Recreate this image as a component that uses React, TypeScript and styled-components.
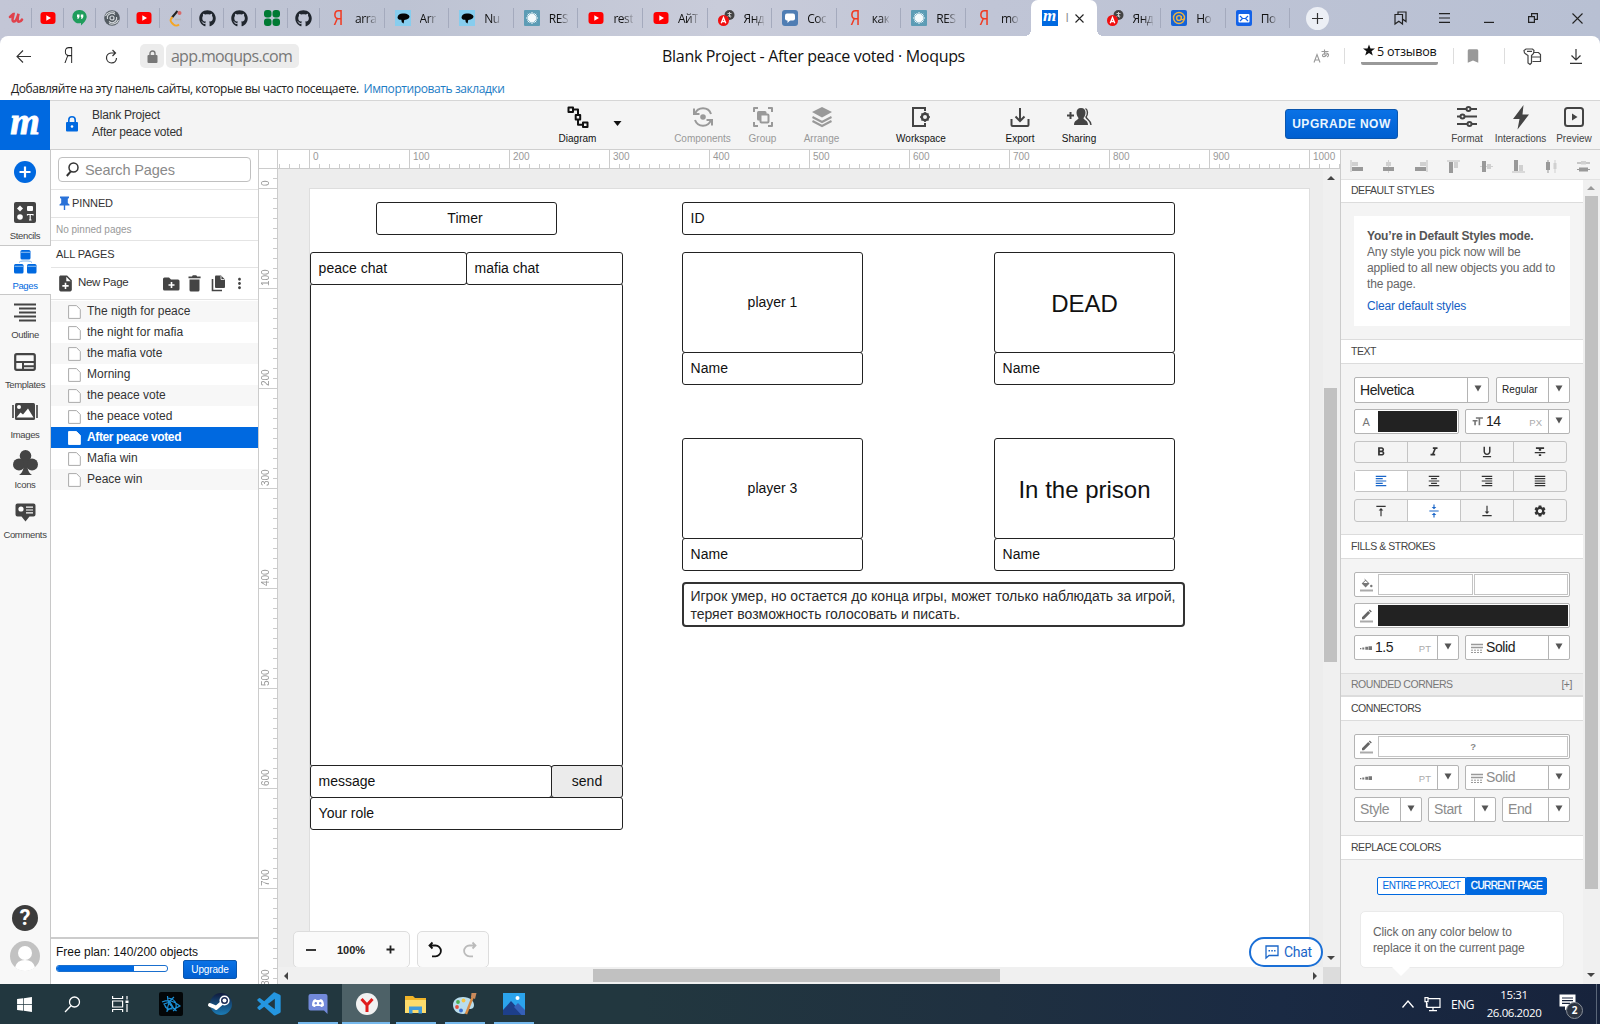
import React from "react";
import styled, { createGlobalStyle, css } from "styled-components";
import { FaGithub, FaWindows } from "react-icons/fa";
import { BiLogoVisualStudio } from "react-icons/bi";
import {
  MdNoteAdd, MdMoreVert, MdFormatBold, MdFormatItalic,
  MdFormatUnderlined, MdFormatStrikethrough, MdFormatAlignLeft, MdFormatAlignCenter,
  MdFormatAlignRight, MdFormatAlignJustify, MdVerticalAlignTop, MdVerticalAlignCenter,
  MdVerticalAlignBottom, MdSettings, MdFormatSize, MdBookmark,
} from "react-icons/md";

const arial = `"Liberation Sans", Arial, sans-serif`;
const segoe = `"Open Sans", "Noto Sans", sans-serif`;
const blue = "#0069e0";
const dark = "#444";
const grey = "#999";
const line = "#ccc";

const Global = createGlobalStyle`
  * { box-sizing: border-box; }
  body { margin: 0; overflow: hidden; font-family: ${arial}; color: #222; }
  svg { display: block; flex: none; overflow: visible; }
`;

const Screen = styled.div`
  width: 1600px; height: 1024px; display: flex; flex-direction: column; overflow: hidden; background: #fff;
`;

/* ---------- browser chrome ---------- */
const TabStrip = styled.div`
  height: 36px; display: flex; align-items: center; font-family: ${segoe};
  background: linear-gradient(90deg, #c3c6d6 0, #bdc3d3 25%, #c9ccda 45%, #c0c5d6 62%, #b8c0d3 100%);
`;
const PinnedTab = styled.div`
  width: 32px; height: 20px; display: flex; align-items: center; justify-content: center;
  border-right: 1px solid #a4aabd;
`;
const Tab = styled.div<{ $last?: boolean }>`
  width: 64.6px; height: 20px; display: flex; align-items: center; gap: 9px; padding-left: 10px;
  border-right: 1px solid ${(p) => (p.$last ? "transparent" : "#a4aabd")};
`;
const TabText = styled.span`
  white-space: nowrap; font-size: 12px; letter-spacing: -0.45px; color: #111;
  -webkit-mask-image: linear-gradient(90deg, #000 50%, rgba(0, 0, 0, 0.15)); mask-image: linear-gradient(90deg, #000 50%, rgba(0, 0, 0, 0.15));
`;
const ActiveTab = styled.div`
  position: relative; width: 66px; height: 36px; background: #fff; border-radius: 7px 7px 0 0;
  display: flex; align-items: center; padding-left: 11px;
  &::before, &::after { content: ""; position: absolute; bottom: 0; width: 6px; height: 6px; }
  &::before { left: -6px; background: radial-gradient(circle at 0 0, transparent 6px, #fff 6px); }
  &::after { right: -6px; background: radial-gradient(circle at 100% 0, transparent 6px, #fff 6px); }
`;
const ActiveText = styled.span`width: 4px; margin: 0 5px 0 8px; font-size: 12px; line-height: 16px; color: #888;`;
const YaFav = styled.span`
  width: 16px; height: 16px; flex: none; text-align: center; font: 400 20px/16px "Roboto", sans-serif; color: #f03a22; transform: scaleX(0.8);
`;
const NewTab = styled.div`
  width: 23px; height: 23px; margin-left: 16px; border-radius: 50%; background: #eceff5;
  display: flex; align-items: center; justify-content: center;
`;
const WindowIcons = styled.div`
  margin-left: auto; display: flex; height: 36px; align-items: center;
  > span { width: 44.4px; display: flex; justify-content: center; }
`;
const NavHolder = styled.div`background: linear-gradient(90deg, #c3c6d6, #b8c0d3);`;
const NavBar = styled.div`
  height: 40px; display: grid; grid-template-columns: 1fr auto 1fr; align-items: center; background: #fff;
  border-radius: 8px 8px 0 0; font-family: ${segoe};
`;
const NavLeft = styled.div`display: flex; align-items: center; padding-left: 16px; color: #222;`;
const Ya = styled.span`font: 300 22px/24px "Roboto", sans-serif; width: 12px; margin: 0 31px 0 31px; transform: scaleX(0.72);`;
const Pill = styled.span<{ $w: number }>`
  width: ${(p) => p.$w}px; height: 24px; border-radius: 5px; background: #ececec; display: flex;
  align-items: center; justify-content: center; color: #787878; font-size: 16px; letter-spacing: -0.66px; margin-right: 2px; padding-right: ${(p) => (p.$w > 30 ? 2 : 0)}px;
`;
const NavTitle = styled.div`font-size: 16px; letter-spacing: -0.32px; color: #111; white-space: nowrap; padding-left: 27px;`;
const NavRight = styled.div`display: flex; align-items: center; justify-content: flex-end; height: 100%; padding-right: 18px;`;
const Sep = styled.i<{ $l: number; $r: number }>`width: 1px; height: 16px; background: #ddd; margin: 0 ${(p) => p.$r}px 0 ${(p) => p.$l}px;`;
const Reviews = styled.div`
  width: 77px; height: 21px; border-bottom: 3px solid #999; border-radius: 0 0 2px 2px; margin-top: -4px; font-size: 12.5px; line-height: 16px;
  letter-spacing: -0.2px; color: #111; white-space: nowrap; display: flex; gap: 2px; padding-left: 2px;
`;
const Bookmarks = styled.div`
  height: 24px; padding: 1px 0 0 11px; font: 12px/24px ${segoe}; letter-spacing: -0.41px; color: #222; white-space: nowrap;
  a { color: #1b7cc4; margin-left: 2px; }
`;

/* ---------- app header ---------- */
const Header = styled.header`
  height: 50px; flex: none; display: flex; background: #f4f4f4; border-top: 1px solid #d6d6d6; border-bottom: 1px solid #cfcfcf;
`;
const Logo = styled.div`
  width: 50px; height: 50px; margin-top: -1px; background: ${blue}; color: #fff; flex: none; text-align: center;
  font: italic 700 38px/42px "Liberation Serif", serif; -webkit-text-stroke: 0.8px #fff;
`;
const LogoFav = styled.span`
  width: 16px; height: 16px; flex: none; background: ${blue}; color: #fff; text-align: center; font: italic 700 17px/12px "Liberation Serif", serif;
`;
const ProjectName = styled.div`
  display: flex; align-items: center; gap: 14px; padding: 0 0 2px 16px; width: 500.500px; flex: none;
  font-size: 12px; line-height: 17px; letter-spacing: -0.22px; color: #333;
`;
const Tools = styled.div`display: flex; width: 620px; flex: none;`;
const Tool = styled.div<{ $w: number; $tone?: string }>`
  width: ${(p) => p.$w}px; flex: none; display: flex; flex-direction: column; align-items: center; padding-top: 4px;
  font-size: 10px; line-height: 12px; color: ${(p) => p.$tone ?? "#111"}; white-space: nowrap;
  svg { margin-bottom: 4px; }
`;
const Spacer = styled.i<{ $w: number }>`width: ${(p) => p.$w}px; flex: none;`;
const UpgradeNow = styled.button`
  margin: 8px 0 0 114.5px; width: 113px; height: 30px; border: 1px solid #0b56ad; border-radius: 3px; padding: 0; flex: none;
  background: linear-gradient(#0a72e6, #005fd0); color: #eaf6ff; font: 700 12px ${arial}; letter-spacing: 0.55px;
`;
const HeaderRight = styled.div`display: flex; margin-left: 42px; flex: none;`;

/* ---------- workspace ---------- */
const Main = styled.div`flex: 1; display: flex; min-height: 0;`;
const Sidebar = styled.nav`
  width: 51px; flex: none; background: #f8f8f8; display: flex; flex-direction: column; align-items: center;
  border-right: 1px solid #c8c8c8;
`;
const AddButton = styled.div`
  width: 22px; height: 22px; border-radius: 50%; background: ${blue}; margin: 11px 0 12px;
  display: flex; align-items: center; justify-content: center; flex: none;
`;
const SideItem = styled.div<{ $active?: boolean }>`
  width: 51px; height: 49.8px; flex: none; display: flex; flex-direction: column; align-items: center; justify-content: flex-end;
  gap: 6px; padding-bottom: 3px; font-size: 9.5px; line-height: 12px; letter-spacing: -0.35px; color: #444;
  ${(p) => p.$active && css`background: #fff; color: ${blue}; border-top: 1px solid #c8c8c8; border-bottom: 1px solid #c8c8c8; padding-bottom: 2px;`}
`;
const SideFoot = styled.div`margin-top: auto; padding-bottom: 13px; display: flex; flex-direction: column; align-items: center; gap: 10px;`;
const HelpDot = styled.div`
  width: 26px; height: 26px; border-radius: 50%; background: #3c3c3c; color: #fff; font: 700 22px/26px "Roboto", sans-serif; text-align: center;
`;

const PagesPanel = styled.aside`width: 208px; flex: none; display: flex; flex-direction: column; border-right: 1px solid #ccc; background: #fff;`;
const Search = styled.div`
  margin: 7px 7px 7px 7px; height: 25px; border: 1px solid #c0c0c0; border-radius: 4px; display: flex; align-items: center; gap: 6px;
  padding-left: 7px; color: #8a8a8a; font-size: 14.5px; letter-spacing: -0.1px; flex: none;
`;
const PanelRow = styled.div<{ $h: number; $size?: number; $color?: string }>`
  height: ${(p) => p.$h}px; flex: none; border-top: 1px solid #e4e4e4; padding: 0 0 ${(p) => (p.$size ? 0 : 1)}px 5px; display: flex; align-items: center;
  font-size: ${(p) => p.$size ?? 11}px; letter-spacing: ${(p) => (p.$size ? 0 : -0.1)}px; color: ${(p) => p.$color ?? "#333"};
`;
const PinnedLabel = styled.span`margin: -1px 0 0 -1px;`;
const NewPage = styled.span`font-size: 11.5px; letter-spacing: -0.35px; width: 85px; margin: -3px 0 0 3px;`;
const TrashSlot = styled.span`margin: 0 10px 0 8px;`;
const PageList = styled.div`border-top: 1px solid #e4e4e4; padding-top: 1px;`;
const PageRow = styled.div<{ $on?: boolean }>`
  height: 21px; display: flex; align-items: center; gap: 6px; padding-left: 17px; font-size: 12px; color: #333;
  &:nth-child(odd) { background: #f7f7f7; }
  span { margin-top: -2px; }
  ${(p) => p.$on && css`&&& { background: ${blue}; color: #fff; font-weight: 700; letter-spacing: -0.39px; }`}
`;
const Plan = styled.div`margin-top: auto; height: 47px; border-top: 2px solid #ccc; padding: 6px 0 0 5px; font-size: 12px; line-height: 15px; color: #111;`;
const PlanRow = styled.div`display: flex; gap: 15px;`;
const Meter = styled.div`width: 112px; height: 7px; margin-top: 5px; border: 1px solid #1a6fce; border-radius: 3px; overflow: hidden; background: #fff;`;
const MeterFill = styled.div`height: 100%; background: ${blue};`;
const UpgradeBtn = styled.div`
  width: 54px; height: 19px; border: 1px solid #0b56ad; border-radius: 2px; background: linear-gradient(#0a72e6, #005fd0);
  color: #fff; font-size: 10px; line-height: 18px; text-align: center; letter-spacing: -0.15px;
`;

const VRuler = styled.div`width: 19px; flex: none; border-right: 1px solid ${line}; overflow: hidden; background: #fff;`;
const VCorner = styled.div`height: 19px; border-bottom: 1px solid ${line};`;
const VScale = styled.div`
  height: 815px; overflow: hidden;
  background:
    repeating-linear-gradient(180deg, ${line} 0 1px, transparent 1px 100px) 0 19px / 100% 100px,
    repeating-linear-gradient(180deg, ${line} 0 1px, transparent 1px 10px) 14px 9px / 4px 10px repeat-y;
`;
const VCell = styled.div<{ $h: number }>`
  height: ${(p) => p.$h}px; width: 13px; writing-mode: vertical-rl; transform: rotate(180deg); font-size: 10px; line-height: 13px; color: #999;
  padding-top: 3px;
`;
const Center = styled.div`width: 1062px; flex: none; display: flex; flex-direction: column;`;
const HRuler = styled.div`
  height: 19px; flex: none; border-bottom: 1px solid ${line}; display: flex; padding-left: 31px; overflow: hidden;
  background:
    repeating-linear-gradient(90deg, ${line} 0 1px, transparent 1px 100px) 31px 0 / 100px 100%,
    repeating-linear-gradient(90deg, ${line} 0 1px, transparent 1px 10px) 1px 14px / 10px 4px repeat-x;
  background-color: #fff;
`;
const HCell = styled.div`width: 100px; flex: none; padding-left: 4px; font-size: 10px; line-height: 14px; color: #999;`;
const StageRow = styled.div`height: 798px; flex: none; display: flex;`;
const Stage = styled.div`width: 1045px; position: relative; overflow: hidden; background: #ededed;`;
const Sheet = styled.div`position: absolute; left: 31px; top: 19px; width: 1001px; height: 800px; background: #fff; border: 1px solid #dedede;`;
const Shape = styled.div<{ $x: number; $y: number; $w: number; $h: number; $c?: boolean; $size?: number; $bg?: string; $note?: boolean; $pr?: number }>`
  position: absolute; left: ${(p) => p.$x - 278}px; top: ${(p) => p.$y - 169}px; width: ${(p) => p.$w}px; height: ${(p) => p.$h}px;
  border: ${(p) => (p.$note ? "2px solid #333" : "1px solid #222")}; border-radius: ${(p) => (p.$note ? 4 : 3)}px; background: ${(p) => p.$bg ?? "#fff"};
  display: flex; align-items: center; justify-content: ${(p) => (p.$c ? "center" : "flex-start")};
  padding: ${(p) => (p.$size ? "2px" : "0")} ${(p) => p.$pr ?? 0}px ${(p) => (p.$size || p.$note ? "0" : "2px")} ${(p) => (p.$c ? 0 : p.$note ? 6.4 : 7.6)}px;
  font-size: ${(p) => p.$size ?? 14}px; line-height: ${(p) => (p.$note ? "18px" : "normal")}; color: ${(p) => (p.$note ? "#2a2a2a" : "#111")}; white-space: pre;
`;
const Float = styled.div<{ $x: number; $w: number }>`
  position: absolute; left: ${(p) => p.$x - 278}px; bottom: -1px; width: ${(p) => p.$w}px; height: 37px; border: 1px solid #ddd; border-radius: 5px;
  background: #fafafa; display: flex; align-items: center; justify-content: space-between; padding: 0 ${(p) => (p.$w < 100 ? 11 : 14)}px 0 ${(p) => (p.$w < 100 ? 10 : 12)}px;
  font: 700 11px ${arial}; color: #222;
`;
const Chat = styled.div`
  position: absolute; right: 0; bottom: 0; width: 74px; height: 30px; border: 2px solid #1a6fd6; border-radius: 15px; background: #fff;
  color: #1a66c8; font: 14px "Roboto", sans-serif; letter-spacing: -0.3px; display: flex; align-items: center; gap: 5px; padding-left: 14px;
`;
const VScroll = styled.div`
  width: 17px; background: #f0f0f0; display: flex; flex-direction: column; align-items: center; justify-content: space-between;
  padding: 7px 2px 7px 0;
`;
const HScroll = styled.div`height: 17px; display: flex; background: #f0f0f0;`;
const HTrack = styled.div`width: 1045px; display: flex; align-items: center; padding: 0 6px 0 6px;`;
const HThumb = styled.div`width: 407px; height: 13px; background: #c1c1c1; margin: 0 auto 0 305px;`;
const ScrollCorner = styled.div`flex: 1; background: #dcdcdc;`;
const VThumb = styled.div<{ $h: number; $mt: number }>`width: 13px; height: ${(p) => p.$h}px; margin: ${(p) => p.$mt}px 0 auto; background: #c1c1c1; flex: none;`;
const Arrow = styled.i<{ $d: "up" | "down" | "left" | "right"; $color?: string }>`
  width: 0; height: 0; flex: none; border: 4px solid transparent;
  ${(p) => p.$d === "up" && css`border-top: 0; border-bottom-color: ${p.$color ?? "#444"};`}
  ${(p) => p.$d === "down" && css`border-bottom: 0; border-top-color: ${p.$color ?? "#444"};`}
  ${(p) => p.$d === "left" && css`border-left: 0; border-right-color: ${p.$color ?? "#444"};`}
  ${(p) => p.$d === "right" && css`border-right: 0; border-left-color: ${p.$color ?? "#444"};`}
`;

/* ---------- format panel ---------- */
const FormatPanel = styled.aside`width: 260px; flex: none; border-left: 1px solid #ccc; background: #f4f4f4; display: flex; flex-direction: column;`;
const AlignBar = styled.div`
  height: 30px; flex: none; border-bottom: 1px solid #e2e2e2; display: flex; align-items: center; justify-content: space-between; padding: 3px 10px 0 9px;
`;
const FormatBody = styled.div`flex: 1; display: flex; min-height: 0;`;
const Sections = styled.div`width: 242px; overflow: hidden;`;
const PanelScroll = styled.div`
  width: 17px; background: #f0f0f0; display: flex; flex-direction: column; align-items: center; justify-content: space-between; padding: 6px 2px 7px 1px;
`;
const SectionHead = styled.div<{ $first?: boolean; $grey?: boolean }>`
  height: ${(p) => (p.$first || p.$grey ? 23 : 25)}px; border-bottom: 1px solid #dcdcdc; border-top: ${(p) => (p.$first ? 0 : 1)}px solid #dcdcdc;
  background: ${(p) => (p.$grey ? "#ededed" : "#fff")}; color: ${(p) => (p.$grey ? "#777" : "#444")}; display: flex; align-items: center; justify-content: space-between;
  padding: 0 11px ${(p) => (p.$grey ? 1 : 2)}px 10px; font-size: 10.5px; letter-spacing: -0.46px;
`;
const SectionBody = styled.div<{ $h: number }>`height: ${(p) => p.$h}px; padding: 13px 13px 0; display: flex; flex-direction: column; gap: 6px;`;
const Notice = styled.div`
  height: 110px; padding: 12px 13px 0; background: #fff; font-size: 12px; line-height: 16px; letter-spacing: -0.15px; color: #666;
  b { display: block; letter-spacing: -0.18px; color: #555; } a { display: block; margin-top: 6px; color: #1460c4; }
`;
const FieldRow = styled.div<{ $gap?: number; $mt?: number }>`display: flex; gap: ${(p) => p.$gap ?? 6}px; width: 216px; margin-top: ${(p) => p.$mt ?? 0}px;`;
const Field = styled.div<{ $w?: number; $h?: number; $size?: number; $mute?: boolean }>`
  width: ${(p) => p.$w ?? 216}px; height: ${(p) => p.$h ?? 25}px; flex: none; display: flex; align-items: center; border: 1px solid #b4b4b4; border-radius: 2px;
  background: #fff; font-size: ${(p) => p.$size ?? 14}px; letter-spacing: ${(p) => (p.$size ? 0.1 : -0.42)}px; color: ${(p) => (p.$mute ? "#8c8c8c" : "#222")}; padding-left: 5px;
`;
const FieldText = styled.span`flex: 1; padding-bottom: 1px; white-space: nowrap;`;
const Unit = styled.span`font-size: 9.5px; letter-spacing: 0; color: #aaa; padding: 2px 6px 0 0;`;
const Drop = styled.span`width: 21px; align-self: stretch; flex: none; border-left: 1px solid #b4b4b4; display: flex; align-items: center; justify-content: center; padding-bottom: 3px;`;
const Swatch = styled.span<{ $bg?: string; $next?: boolean }>`
  flex: 1; height: 21px; margin: 0 1px 0 ${(p) => (p.$next ? 0 : 3)}px; background: ${(p) => p.$bg ?? "#fff"}; border: 1px solid ${(p) => p.$bg ?? "#c4c4c4"};
  font: 700 9.5px/20px ${arial}; color: #888; text-align: center;
`;
const IconSlot = styled.span`width: 12px; margin-right: 3px; display: flex; justify-content: center; color: #777; font-size: 11px;`;
const Segments = styled.div<{ $h: number }>`width: 213px; height: ${(p) => p.$h}px; margin-top: 1px; display: flex; border: 1px solid #c4c4c4; border-radius: 3px;`;
const Segment = styled.div<{ $on?: boolean }>`
  flex: 1; display: flex; align-items: center; justify-content: center; color: ${(p) => (p.$on ? "#1a66c8" : "#333")};
  background: ${(p) => (p.$on ? "#fff" : "transparent")}; & + & { border-left: 1px solid #c4c4c4; }
`;
const Toggle = styled.div`display: flex; width: 170px; height: 18px; margin: 17px 0 0 36px; font-size: 10px; line-height: 16px; letter-spacing: -0.6px; text-align: center;`;
const ToggleHalf = styled.div<{ $on?: boolean }>`
  flex: ${(p) => (p.$on ? 81 : 89)}; border: 1px solid ${blue}; background: ${(p) => (p.$on ? blue : "#fff")}; color: ${(p) => (p.$on ? "#fff" : blue)};
  border-radius: ${(p) => (p.$on ? "0 2px 2px 0" : "2px 0 0 2px")}; ${(p) => p.$on && "-webkit-text-stroke: 0.3px #fff;"}
`;
const Hint = styled.div`
  position: relative; width: 204px; height: 57px; margin: 16px 0 0 19px; padding: 12px 12px; background: #fff; border: 1px solid #eaeaea; border-radius: 5px;
  font-size: 12px; line-height: 16px; letter-spacing: -0.15px; color: #666;
  &::after { content: ""; position: absolute; left: 31px; bottom: -9px; border: 9px solid transparent; border-bottom: 0; border-top-color: #fff; }
`;

/* ---------- task bar ---------- */
const TaskBar = styled.div`
  height: 40px; flex: none; display: flex; color: #fff; font: 12px ${segoe};
  background: linear-gradient(90deg, #22373f 0, #22373f 40%, #1f3040 62%, #1a2a43 80%, #17233c 100%);
`;
const Task = styled.div<{ $open?: boolean; $active?: boolean; $w?: number }>`
  width: ${(p) => p.$w ?? 49}px; display: flex; align-items: center; justify-content: center; position: relative;
  ${(p) => p.$active && css`background: #4d6167; width: 48px; margin-right: 1px; padding-left: 1px;`}
  ${(p) => p.$open && css`&::after { content: ""; position: absolute; bottom: 0; left: ${p.$active ? 0 : 5}px; right: ${p.$active ? 0 : 4}px; height: 2px; background: #76b9ed; }`}
`;
const Tray = styled.div`margin-left: auto; display: flex; align-items: center; letter-spacing: -0.45px;`;
const NetSlot = styled.span`margin: 0 10px;`;
const Clock = styled.div`width: 56px; margin: 0 17px 0 12px; text-align: center; line-height: 18px; font-size: 11.5px; white-space: nowrap; letter-spacing: -0.4px;`;
const Notify = styled.div`position: relative; width: 17px; height: 17px; margin: -4px 20px 0 0;`;
const Badge = styled.span`
  position: absolute; left: 7px; top: 8px; width: 17px; height: 17px; border-radius: 50%; background: #2c3442; border: 1px solid #8a909a;
  font: 700 10px/15px ${segoe}; text-align: center; letter-spacing: 0;
`;
const ShowDesk = styled.i`width: 1px; height: 40px; background: #5a6678; margin-right: 3px;`;

/* ---------- icons ---------- */
const S = ({ w = 24, h = w, vb, children, ...r }: any) => (
  <svg width={w} height={h} viewBox={vb ?? `0 0 ${w} ${h}`} fill="none" {...r}>{children}</svg>
);
const YouTubeIcon = () => (
  <S w={16} h={12}><rect x="0.5" width="15" height="12" rx="3" fill="#f00" /><path d="M6.3 3.2v5.6L11 6z" fill="#fff" /></S>
);
const Caret = () => <S w={8} h={7}><path d="M0.5 0.5h7L4 6.5z" fill="#555" /></S>;
const PageIcon = ({ on }: { on?: boolean }) => (
  <S w={13} h={14}><path d="M0.6 0.6H8.5L12.3 4.5V13.4H0.6z" fill="#fff" stroke={on ? "#fff" : "#aaa"} strokeWidth="1" /></S>
);
const ColorIcon = ({ kind }: { kind: "fill" | "pen" }) => (
  <S w={13} h={14}>
    {kind === "pen" ? (
      <path d="M2 8.2L8.2 2l2 2L4 10.2H2zM8.8 1.4l1-1 2 2-1 1z" fill="#666" />
    ) : (
      <><path d="M4.2 0.3L9.5 5.6 5.6 9.5 1.7 5.6l3.4-3.4z" fill="#777" /><path d="M3.4 5h4.4L5.6 2.8z" fill="#fff" /><circle cx="11.3" cy="8" r="1.2" fill="#777" /></>
    )}
    <path d="M0 12.5h13" stroke="#aaa" strokeWidth="2" />
  </S>
);
const WeightIcon = () => <S w={12} h={6}><path d="M0 3h1.3v1.3H0zM2.300 2.500h2v2h-2zM5.300 1.800H8v3H5.300zM8.500 1.200H12v3.800H8.500z" fill="#777" /></S>;
const DashIcon = () => <S w={12} h={10}><path d="M0 1.5h12M0 4.5h12" stroke="#999" strokeWidth="1.4" /><path d="M0 7.2h12M0 9.5h12" stroke="#999" strokeDasharray="2 1" /></S>;

const AlignIcon = ({ k }: { k: number }) => {
  const a = "#999", b = "#d0d0d0";
  const drawings = [
    <><path d="M1 0v12" stroke={b} strokeWidth="1.5" /><path d="M2 2h6v4H2z" fill={b} /><path d="M2 7h11v4H2z" fill={a} /></>,
    <><path d="M6.5 0v13" stroke={b} /><path d="M4 2h5v4H4z" fill={b} /><path d="M1 7h11v4H1z" fill={a} /></>,
    <><path d="M12 0v12" stroke={b} strokeWidth="1.5" /><path d="M5 2h6v4H5z" fill={b} /><path d="M0 7h11v4H0z" fill={a} /></>,
    <><path d="M0 1h13" stroke={b} strokeWidth="1.5" /><path d="M2 2h4v11H2z" fill={a} /><path d="M7 2h4v6H7z" fill={b} /></>,
    <><path d="M0 6.5h13" stroke={b} /><path d="M2 1h4v11H2z" fill={a} /><path d="M7 4h4v5H7z" fill={b} /></>,
    <><path d="M0 12h13" stroke={b} strokeWidth="1.5" /><path d="M2 0h4v11H2z" fill={a} /><path d="M7 5h4v6H7z" fill={b} /></>,
    <><path d="M3 0v13" stroke={a} /><path d="M1 2h4v8H1z" fill={a} /><path d="M10 0v13" stroke={b} /><path d="M8.5 3h3v6h-3z" fill={b} /></>,
    <><path d="M0 3h13" stroke={a} /><path d="M4 1h5v3.5H4z" fill={b} /><path d="M0 9.5h13" stroke={a} /><path d="M2 7.5h9v4H2z" fill={a} /></>,
  ];
  return <S w={13} h={13}>{drawings[k]}</S>;
};

const AliceFav = () => (
  <S w={17} h={16}><circle cx="11.5" cy="5" r="5" fill="#444" /><path d="M9.5 3.5h4M11.5 2v5M9.5 6.500c2-2 4-1 3 1" stroke="#ccc" /><circle cx="5.5" cy="10.5" r="5.5" fill="#f10f0f" /><path d="M3.2 13.2L5.5 7.500l2.300 5.700M4 11.500h3" stroke="#fff" strokeWidth="1.300" /></S>
);
const BirdFav = () => (
  <S w={16} h={16}><path d="M0 0h16v16H0z" fill="#87cdee" /><path d="M2.500 7.500C2.800 4.300 6 2.800 9.500 3.600c2.500.3 4.500 1.400 5 2.900-.3 1.800-1.500 2.700-3 2.900L9.200 10 8.600 13.500 6.800 12.300 6.300 9.800C4 10 2.800 9 2.500 7.500z" fill="#050505" /></S>
);
const BurstFav = () => (
  <S w={16} h={16}><rect width="16" height="16" rx="1" fill="#5c9cb5" /><circle cx="8" cy="8" r="4" fill="#f4fafc" /><path d="M8 2v12M2 8h12M3.800 3.800l8.400 8.400M12.200 3.800l-8.400 8.400M5.700 3l4.600 10M10.300 3l-4.600 10M3 5.700l10 4.600M3 10.300l10-4.600" stroke="#f4fafc" strokeWidth="1" /></S>
);
const ChatFav = () => (
  <S w={16} h={16}><rect width="16" height="16" rx="3" fill="#4f7db3" /><rect x="3" y="3.5" width="10" height="7" rx="2" fill="#fff" /><path d="M5.500 10v3l3-3z" fill="#fff" /></S>
);
const AtFav = () => (
  <S w={16} h={16}><rect width="16" height="16" rx="2" fill="#1463d8" /><circle cx="8" cy="8" r="5.5" stroke="#f0b23c" strokeWidth="1.4" /><circle cx="8" cy="8" r="2.4" stroke="#f0b23c" strokeWidth="1.4" /><path d="M10.400 6v2.700c0 1.500 2.600 1.300 2.800-.7" stroke="#f0b23c" strokeWidth="1.200" /></S>
);
const MailFav = () => (
  <S w={16} h={16}><rect width="16" height="16" rx="2" fill="#1463e8" /><rect x="2.5" y="4" width="11" height="8.5" rx="1" fill="#fff" /><path d="M4 6l2.500 2.500h3L12 6M4 11l2.500-2.500M12 11L9.500 8.500" stroke="#1463e8" strokeWidth="1.200" /></S>
);

/* ---------- data ---------- */
const tabs: [React.ReactNode, string][] = [
  [<YaFav>Я</YaFav>, "arra"], [<BirdFav />, "Arr"], [<BirdFav />, "Nu"], [<BurstFav />, "RES"], [<YouTubeIcon />, "rest"],
  [<YouTubeIcon />, "АйТ"], [<AliceFav />, "Янд"], [<ChatFav />, "Сос"], [<YaFav>Я</YaFav>, "как"], [<BurstFav />, "RES"], [<YaFav>Я</YaFav>, "mo"],
];
const tabsAfter: [React.ReactNode, string][] = [[<AliceFav />, "Янд"], [<AtFav />, "Но"], [<MailFav />, "По"]];

const pages = ["The nigth for peace", "the night for mafia", "the mafia vote", "Morning", "the peace vote", "the peace voted", "After peace voted", "Mafia win", "Peace win"];

interface ShapeData { x: number; y: number; w: number; h: number; t: string; c?: boolean; size?: number; bg?: string; note?: boolean; pr?: number }
const shapes: ShapeData[] = [
  { x: 376, y: 202, w: 181, h: 33, t: "Timer", c: true, pr: 3 },
  { x: 682, y: 202, w: 493, h: 33, t: "ID" },
  { x: 310, y: 283, w: 313, h: 484, t: "" },
  { x: 310, y: 252, w: 157, h: 33, t: "peace chat" },
  { x: 466, y: 252, w: 157, h: 33, t: "mafia chat" },
  { x: 310, y: 765, w: 242, h: 33, t: "message" },
  { x: 551, y: 765, w: 72, h: 33, t: "send", c: true, bg: "#ebebeb" },
  { x: 310, y: 797, w: 313, h: 33, t: "Your role" },
  { x: 682, y: 252, w: 181, h: 101, t: "player 1", c: true },
  { x: 682, y: 352, w: 181, h: 33, t: "Name" },
  { x: 994, y: 252, w: 181, h: 101, t: "DEAD", c: true, size: 24 },
  { x: 994, y: 352, w: 181, h: 33, t: "Name" },
  { x: 682, y: 438, w: 181, h: 101, t: "player 3", c: true },
  { x: 682, y: 538, w: 181, h: 33, t: "Name" },
  { x: 994, y: 438, w: 181, h: 101, t: "In the prison", c: true, size: 24 },
  { x: 994, y: 538, w: 181, h: 33, t: "Name" },
  { x: 682, y: 582, w: 503, h: 45, note: true, t: "Игрок умер, но остается до конца игры, может только наблюдать за игрой,\nтеряет возможность голосовать и писать." },
];

const Chrome = () => (
  <>
    <TabStrip>
      <PinnedTab><S w={14} h={12} stroke="#e0424c" strokeWidth="2.6" strokeLinecap="round"><path d="M1 5C3 3.500 4 2 4.500 2 4 5 2.500 9 4.500 9.500 7 10 8.500 5 9.500 1.800 8.500 6 8 9.500 10 9.700c1.300 0 2.500-1 3-2" /></S></PinnedTab>
      <PinnedTab><YouTubeIcon /></PinnedTab>
      <PinnedTab><S w={14} h={16}><path d="M7 0a6.700 6.700 0 0 1 6.700 6.600c0 3.700-3 6.500-5.700 9v-2.600A6.700 6.700 0 1 1 7 0z" fill="#1f9d5c" /><path d="M4 4.500h2.500v2.500L5.200 9H4.500V7H4zM7.800 4.500h2.500v2.500L9 9H8.300V7h-.5z" fill="#fff" /></S></PinnedTab>
      <PinnedTab><S w={16} h={16}><circle cx="8" cy="8" r="7.800" fill="#535b62" /><circle cx="8" cy="8" r="2" stroke="#d4d8dc" strokeWidth="1.200" /><path d="M3.500 9A4.600 4.600 0 0 1 11 4.500M12.500 7A4.600 4.600 0 0 1 5 11.500M1.500 6C3 2 8 1 11 2.500M14.500 10C13 14 8 15 5 13.500" stroke="#d4d8dc" strokeWidth="1.100" /></S></PinnedTab>
      <PinnedTab><YouTubeIcon /></PinnedTab>
      <PinnedTab><S w={14} h={17}><path d="M8.500 1L3 7.500" stroke="#222" strokeWidth="2" /><path d="M3.500 7C1 9.500 1 11 3 13l1.500 1.500c1.500 1.300 4 1.300 5.500 0" stroke="#f5a623" strokeWidth="2" /><path d="M6 9.500h6" stroke="#bbb" strokeWidth="1.600" /><circle cx="10.500" cy="3" r="2" fill="#d86a6a" /></S></PinnedTab>
      <PinnedTab><FaGithub size={17} color="#20262e" /></PinnedTab>
      <PinnedTab><FaGithub size={17} color="#20262e" /></PinnedTab>
      <PinnedTab><S w={16} h={16}><rect width="7.500" height="7.500" rx="3" fill="#007a33" /><rect x="8.500" width="7.500" height="7.500" rx="3" fill="#007a33" /><rect y="8.500" width="7.500" height="7.500" rx="3" fill="#007a33" /><rect x="8.500" y="8.500" width="7.500" height="7.500" rx="3" fill="#007a33" /></S></PinnedTab>
      <PinnedTab><FaGithub size={17} color="#20262e" /></PinnedTab>
      {tabs.map(([icon, t], i) => <Tab key={i} $last={i === 10}>{icon}<TabText>{t}</TabText></Tab>)}
      <ActiveTab>
        <LogoFav>m</LogoFav>
        <ActiveText>I</ActiveText>
        <S w={9} h={9} stroke="#222" strokeWidth="1.1"><path d="M0.5 0.5l8 8M8.5 0.5l-8 8" /></S>
      </ActiveTab>
      {tabsAfter.map(([icon, t], i) => <Tab key={i}>{icon}<TabText>{t}</TabText></Tab>)}
      <NewTab><S w={11} h={11} stroke="#333" strokeWidth="1.2"><path d="M5.500 0v11M0 5.500h11" /></S></NewTab>
      <WindowIcons>
        <span><S w={13} h={14} stroke="#222" strokeWidth="1.2"><path d="M1 3.500h7.500V13L4.800 10.200 1 13zM4 3.500V1h8v9.500L8.500 8" /></S></span>
        <span><S w={11} h={10} stroke="#222" strokeWidth="1.2"><path d="M0 0.600h11M0 5h11M0 9.400h11" /></S></span>
        <span><S w={10} h={10} stroke="#222" strokeWidth="1.2"><path d="M0 9.400h10" /></S></span>
        <span><S w={10} h={10} stroke="#222" strokeWidth="1.2"><path d="M0.600 3.600h5.800v5.800H0.600zM3.600 3.500V0.600h5.800v5.800H6.500" /></S></span>
        <span><S w={11} h={11} stroke="#222" strokeWidth="1.1"><path d="M0.500 0.500l10 10M10.500 0.500l-10 10" /></S></span>
      </WindowIcons>
    </TabStrip>
    <NavHolder>
      <NavBar>
        <NavLeft>
          <S w={15} h={13} stroke="#333" strokeWidth="1.1"><path d="M15 6.500H1M7 0.500L1 6.500l6 6" /></S>
          <Ya>Я</Ya>
          <S w={13} h={15} stroke="#333" strokeWidth="1.2"><path d="M7.500 1L10.500 4 7.500 7M10.500 4H6A5 5 0 1 0 11.500 9" /></S>
          <Spacer $w={22} />
          <Pill $w={24}><S w={11} h={13}><path d="M3 6V3.500a2.500 2.500 0 0 1 5 0V6" stroke="#777" strokeWidth="1.4" /><rect x="0.5" y="5" width="10" height="8" rx="1" fill="#777" /></S></Pill>
          <Pill $w={133}>app.moqups.com</Pill>
        </NavLeft>
        <NavTitle>Blank Project - After peace voted · Moqups</NavTitle>
        <NavRight>
          <S w={17} h={16} stroke="#999" strokeWidth="1.1"><path d="M1 14.500L4 6.500l3 8M2 12h4M8.500 3.500h7M11.500 1.500c-.3 3 0 5 1 7M14.500 5c-.5 2.500-2.500 4-4.500 3.500-1.500-.8.500-3.500 3-3.500 3 0 3.500 3 1 4" /></S>
          <Sep $l={14} $r={16} />
          <Reviews><S w={12} h={14}><path d="M6 0.500l1.500 4H12L8.500 7.200l1.300 4.300L6 9 2.200 11.500l1.300-4.300L0 4.500h4.500z" fill="#111" /></S>5 отзывов</Reviews>
          <Sep $l={15} $r={10} />
          <MdBookmark size={18} color="#999" />
          <Sep $l={22} $r={18} />
          <S w={19} h={17} stroke="#444" strokeWidth="1.2"><path d="M3 1h6.500l1.500 1.500-.5 3-2 2V15L7 16.500 5 15V7.500L1.500 5 1 2.500zM4 3.300h5M10.500 4.500h5l2 2v7H9.500M9 9h8.500" /></S>
          <Spacer $w={28} />
          <S w={12} h={15} stroke="#333" strokeWidth="1.2"><path d="M6 0v11M1.500 6.500L6 11l4.500-4.500M0 14.400h12" /></S>
        </NavRight>
      </NavBar>
    </NavHolder>
    <Bookmarks>Добавляйте на эту панель сайты, которые вы часто посещаете. <a>Импортировать закладки</a></Bookmarks>
  </>
);

const HeaderBar = () => (
  <Header>
    <Logo>m</Logo>
    <ProjectName>
      <S w={12} h={16}><path d="M2.800 7V4a3.200 3.200 0 0 1 6.400 0v3" stroke={blue} strokeWidth="1.6" /><rect y="6" width="12" height="9.5" rx="1" fill={blue} /><circle cx="6" cy="10.5" r="1.3" fill="#fff" /></S>
      <div>Blank Project<br />After peace voted</div>
    </ProjectName>
    <Tools>
      <Tool $w={54}>
        <S w={22} h={24} stroke="#111" strokeWidth="2"><path d="M1.500 2.500h4.500v4.500H1.500zM8.700 10h4.500v4.500H8.700zM16 17.500h4.500v4.500H16zM6 4.500h5V10M11 14.500v5.200h5" strokeLinejoin="round" /></S>
        Diagram
      </Tool>
      <Tool $w={26}><S w={9} h={24}><path d="M0.500 16h8l-4 5z" fill="#111" /></S></Tool>
      <Spacer $w={42} />
      <Tool $w={60} $tone={grey}>
        <S w={22} h={24} stroke={grey} strokeWidth="2"><path d="M3 9A8.500 8.500 0 0 1 19 9M19 15A8.500 8.500 0 0 1 3 15M2 3.500V9h5.500M20 20.500V15h-5.500" /><circle cx="11" cy="12" r="2.8" fill={grey} stroke="none" /></S>
        Components
      </Tool>
      <Tool $w={60} $tone={grey}>
        <S w={22} h={24} stroke={grey} strokeWidth="2"><path d="M2 7V3h4M16 3h4v4M20 17v4h-4M6 21H2v-4" strokeLinejoin="round" /><rect x="5" y="6" width="9.5" height="9.5" rx="1.5" fill={grey} stroke="none" /><rect x="8.5" y="9.5" width="8" height="8" rx="1" fill="#f4f4f4" /></S>
        Group
      </Tool>
      <Tool $w={58} $tone={grey}>
        <S w={22} h={24}><path d="M11 2l10 5-10 5.500L1 7z" fill={grey} /><path d="M1.500 12L11 17l9.500-5M1.500 16L11 21l9.500-5" stroke={grey} strokeWidth="2" /></S>
        Arrange
      </Tool>
      <Tool $w={141}>
        <S w={20} h={24} stroke={dark} strokeWidth="2"><path d="M14 6V3H2v18h12v-3" /><circle cx="14" cy="12" r="3.2" strokeWidth="2.400" /><path d="M14 7v2M14 15v2M9 12h2M17 12h2M10.500 8.500l1.300 1.300M16.200 14.200l1.300 1.300M17.500 8.500l-1.300 1.300M11.800 14.200l-1.300 1.300" strokeWidth="1.6" /></S>
        Workspace
      </Tool>
      <Tool $w={57}>
        <S w={20} h={24} stroke={dark} strokeWidth="2"><path d="M10 3v13M5.500 11.500L10 16l4.500-4.500M1.500 14v6q0 1 1 1h15q1 0 1-1v-6" /></S>
        Export
      </Tool>
      <Tool $w={61}>
        <S w={25} h={24}><path d="M0 10.500h7M3.500 7v7" stroke={dark} strokeWidth="2" /><path d="M14 3c3 0 4.500 2 4.500 4.500S17.500 12 16.500 13c0 2 4.500 2 4.500 7H7c0-5 4.500-5 4.500-7-1-1-2-3-2-5.500S11 3 14 3z" fill={dark} /><path d="M18.500 3.500c2.500 1.500 2.500 6 .5 8.500.5 2.500 4.500 2.500 5 8" stroke={dark} strokeWidth="1.400" /></S>
        Sharing
      </Tool>
    </Tools>
    <UpgradeNow>UPGRADE NOW</UpgradeNow>
    <HeaderRight>
      <Tool $w={54} $tone={dark}>
        <S w={20} h={24} stroke={dark} strokeWidth="2"><path d="M0 4h9M14 4h6M0 11.500h3M8 11.500h12M0 19h10M15 19h5" /><circle cx="11.5" cy="4" r="2" /><circle cx="5.5" cy="11.5" r="2" /><circle cx="12.5" cy="19" r="2" /></S>
        Format
      </Tool>
      <Tool $w={53} $tone={dark}>
        <S w={18} h={24}><path d="M11.500 0L1 14h6.500L5.500 24.500 17 9.500h-6.500z" fill={dark} /></S>
        Interactions
      </Tool>
      <Tool $w={54} $tone={dark}>
        <S w={20} h={24}><rect x="1" y="3" width="18" height="18" rx="2.5" stroke={dark} strokeWidth="2" /><path d="M8 8.500v7L13.500 12z" fill={dark} /></S>
        Preview
      </Tool>
    </HeaderRight>
  </Header>
);

const LeftNav = () => (
  <Sidebar>
    <AddButton><S w={12} h={12} stroke="#fff" strokeWidth="2.2"><path d="M6 0.500v11M0.500 6h11" /></S></AddButton>
    <SideItem>
      <S w={22} h={22}><rect width="22" height="21" rx="2" fill={dark} /><path d="M6 3.500l3 3-3 3-3-3z" fill="#fff" /><rect x="13" y="4" width="6" height="5" rx="1" fill="#fff" /><circle cx="6" cy="15" r="2.8" fill="#fff" /><path d="M13.500 13.500v-1h5.500v1M16.200 12.500v5.500M15 18h2.500" stroke="#fff" strokeWidth="1.200" /></S>
      Stencils
    </SideItem>
    <SideItem $active>
      <S w={23} h={24}><rect x="6.5" y="0" width="10" height="9.5" rx="1.5" fill={blue} /><rect x="0" y="14" width="9.5" height="9.5" rx="1.5" fill={blue} /><rect x="13" y="14" width="9.5" height="9.5" rx="1.5" fill={blue} /><path d="M5 12.500q1-1.500 4-1.500h5q3 0 4 1.500" stroke="#7fb4ea" /><path d="M7 2.300h9M0.500 16.300h8.500M13.500 16.300H22" stroke="#8fc0f2" /></S>
      Pages
    </SideItem>
    <SideItem>
      <S w={22} h={20} stroke={dark} strokeWidth="2"><path d="M0 1.500h22M5 5.500h17M5 9.500h17M0 13.500h22M5 17.500h17" /></S>
      Outline
    </SideItem>
    <SideItem>
      <S w={22} h={21} stroke={dark}><rect x="1.200" y="2.200" width="19.600" height="15.600" rx="1.500" strokeWidth="2.200" /><path d="M1 10h20M9 10v8M10 14.200h11" strokeWidth="2" /></S>
      Templates
    </SideItem>
    <SideItem>
      <S w={26} h={22}><path d="M1 4v13M25 4v13" stroke={dark} strokeWidth="1.6" /><rect x="3" y="2" width="20" height="17" rx="1.5" fill={dark} /><path d="M4.500 16.500l4-5 2.500 2 5-6 5.500 9z" fill="#fff" /><circle cx="7" cy="6" r="2" fill="#fff" /></S>
      Images
    </SideItem>
    <SideItem>
      <S w={25} h={23} vb="0 0 25 23" fill={dark}><circle cx="12.5" cy="5.8" r="5.8" /><circle cx="6" cy="14.5" r="6" /><circle cx="19" cy="14.5" r="6" /><path d="M10 9h5l-.5 9q1 5 4.500 7H6q3.500-2 4.500-7z" fill={dark} /></S>
      Icons
    </SideItem>
    <SideItem>
      <S w={21} h={22}><path d="M2.500 2.500h16q2 0 2 2v9q0 2-2 2h-4L10.500 20.500 6.500 15.500h-4q-2 0-2-2v-9q0-2 2-2z" fill={dark} /><circle cx="6" cy="8" r="2.600" fill="#fff" /><path d="M11 6.200h7M11 9h7M11 11.800h7" stroke="#fff" strokeWidth="1.200" /></S>
      Comments
    </SideItem>
    <SideFoot>
      <HelpDot>?</HelpDot>
      <S w={30} h={30}><circle cx="15" cy="15" r="15" fill="#c2c2c2" /><circle cx="15" cy="12" r="7" fill="#fff" /><path d="M5 26.200Q7 19 15 19t10 7.200A15 15 0 0 1 5 26.200z" fill="#fff" /></S>
    </SideFoot>
  </Sidebar>
);

const Pages = () => (
  <PagesPanel>
    <Search><S w={13} h={15} stroke="#333" strokeWidth="1.5"><circle cx="7.5" cy="5.5" r="4.5" /><path d="M4.800 9.300L0.800 14" strokeWidth="2" /></S>Search Pages</Search>
    <PanelRow $h={28}><S w={17} h={14}><path d="M4 0.500h9v1.500l-1.200.8v4.200l1.700 1.500v1H9.200V14H7.800V9.500H3.500v-1L5.200 7V2.800L4 2z" fill="#2a72d8" /></S><PinnedLabel>PINNED</PinnedLabel></PanelRow>
    <PanelRow $h={23} $size={10} $color="#999">No pinned pages</PanelRow>
    <PanelRow $h={27}>ALL PAGES</PanelRow>
    <PanelRow $h={32}>
      <MdNoteAdd size={19} color={dark} /><NewPage>New Page</NewPage>
      <S w={17} h={14}><path d="M1.500 1.500H6l2 2h7q1.500 0 1.500 1.500v8q0 1.500-1.500 1.500H1.500Q0 14.500 0 13V3Q0 1.500 1.500 1.500z" fill={dark} /><path d="M8.500 6v6M5.500 9h6" stroke="#fff" strokeWidth="1.600" /></S>
      <TrashSlot><S w={13} h={17}><path d="M0.500 1.500h3.500l.8-1.200h3.500l.8 1.200h3.500v1.700H0.500zM1.500 4.500h10v10.500q0 1.500-1.500 1.500H3q-1.500 0-1.500-1.500z" fill={dark} /></S></TrashSlot>
      <S w={14} h={17}><path d="M5 0.500h5l4 4V12q0 1-1 1H5q-1 0-1-1V1.500q0-1 1-1z" fill={dark} /><path d="M1.500 4v11.500H11" stroke={dark} strokeWidth="1.6" /><path d="M10 1v3.500h3.500" stroke="#fff" strokeWidth="0.8" /></S>
      <Spacer $w={6} />
      <MdMoreVert size={17} color={dark} />
    </PanelRow>
    <PageList>
      {pages.map((p, i) => <PageRow key={p} $on={i === 6}><PageIcon on={i === 6} /><span>{p}</span></PageRow>)}
    </PageList>
    <Plan>
      Free plan: 140/200 objects
      <PlanRow><Meter><MeterFill style={{ width: `${(140 / 200) * 100}%` }} /></Meter><UpgradeBtn>Upgrade</UpgradeBtn></PlanRow>
    </Plan>
  </PagesPanel>
);

const CanvasArea = () => (
  <>
    <VRuler>
      <VCorner />
      <VScale>{[0, 100, 200, 300, 400, 500, 600, 700, 800].map((n) => <VCell key={n} $h={n ? 100 : 20}>{n}</VCell>)}</VScale>
    </VRuler>
    <Center>
      <HRuler>{Array.from({ length: 11 }, (_, i) => <HCell key={i}>{i * 100}</HCell>)}</HRuler>
      <StageRow>
        <Stage>
          <Sheet />
          {shapes.map((s, i) => (
            <Shape key={i} $x={s.x} $y={s.y} $w={s.w} $h={s.h} $c={s.c} $size={s.size} $bg={s.bg} $note={s.note} $pr={s.pr}>{s.t}</Shape>
          ))}
          <Float $x={293} $w={117}>
            <S w={10} h={10} stroke="#222" strokeWidth="1.8"><path d="M0 5h10" /></S>100%<S w={9} h={9} stroke="#222" strokeWidth="1.8"><path d="M0.500 4.500h8M4.500 0.500v8" /></S>
          </Float>
          <Float $x={417} $w={72}>
            <S w={14} h={16} stroke="#111" strokeWidth="1.8"><path d="M4.500 0.500L1.500 3.500l3 3M1.500 3.500H7.500a5.300 5.300 0 0 1 0 10.800H4" /></S>
            <S w={14} h={16} stroke="#bbb" strokeWidth="1.8"><path d="M9.500 0.500l3 3-3 3M12.500 3.500H6.500a5.300 5.300 0 0 0 0 10.800H10" /></S>
          </Float>
          <Chat><S w={14} h={14} stroke="#1a66c8" strokeWidth="1.3"><path d="M1 1h12v9.500H4L1 13z" /><path d="M3.500 5.700h7" strokeDasharray="1.500 1.300" strokeWidth="1.500" /></S>Chat</Chat>
        </Stage>
        <VScroll>
          <Arrow $d="up" />
          <VThumb $h={274} $mt={208} />
          <Arrow $d="down" />
        </VScroll>
      </StageRow>
      <HScroll>
        <HTrack><Arrow $d="left" /><HThumb /><Arrow $d="right" /></HTrack>
        <ScrollCorner />
      </HScroll>
    </Center>
  </>
);

interface SelectProps { w: number; h?: number; size?: number; mute?: boolean; icon?: React.ReactNode; text: string; unit?: string }
const Select = ({ w, h, size, mute, icon, text, unit }: SelectProps) => (
  <Field $w={w} $h={h} $size={size} $mute={mute}>
    {icon && <IconSlot>{icon}</IconSlot>}
    <FieldText>{text}</FieldText>
    {unit && <Unit>{unit}</Unit>}
    <Drop><Caret /></Drop>
  </Field>
);

const Format = () => (
  <FormatPanel>
    <AlignBar>{[0, 1, 2, 3, 4, 5, 6, 7].map((k) => <AlignIcon key={k} k={k} />)}</AlignBar>
    <FormatBody>
      <Sections>
        <SectionHead $first>DEFAULT STYLES</SectionHead>
        <SectionBody $h={136}>
          <Notice><b>You’re in Default Styles mode.</b>Any style you pick now will be<br />applied to all new objects you add to<br />the page.<a>Clear default styles</a></Notice>
        </SectionBody>
        <SectionHead>TEXT</SectionHead>
        <SectionBody $h={170}>
          <FieldRow $gap={7}><Select w={135} h={26} text="Helvetica" /><Select w={74} h={26} size={10} text="Regular" /></FieldRow>
          <FieldRow>
            <Field $w={105}><IconSlot>A</IconSlot><Swatch $bg="#222" /></Field>
            <Select w={105} icon={<MdFormatSize size={13} />} text="14" unit="PX" />
          </FieldRow>
          <Segments $h={22}>
            <Segment><MdFormatBold size={14} /></Segment><Segment><MdFormatItalic size={14} /></Segment><Segment><MdFormatUnderlined size={14} /></Segment><Segment><MdFormatStrikethrough size={14} /></Segment>
          </Segments>
          <Segments $h={22}>
            <Segment $on><MdFormatAlignLeft size={14} /></Segment><Segment><MdFormatAlignCenter size={14} /></Segment><Segment><MdFormatAlignRight size={14} /></Segment><Segment><MdFormatAlignJustify size={14} /></Segment>
          </Segments>
          <Segments $h={23}>
            <Segment><MdVerticalAlignTop size={14} /></Segment><Segment $on><MdVerticalAlignCenter size={14} /></Segment><Segment><MdVerticalAlignBottom size={14} /></Segment><Segment><MdSettings size={14} /></Segment>
          </Segments>
        </SectionBody>
        <SectionHead>FILLS &amp; STROKES</SectionHead>
        <SectionBody $h={114}>
          <Field><IconSlot><ColorIcon kind="fill" /></IconSlot><Swatch /><Swatch $next /></Field>
          <Field><IconSlot><ColorIcon kind="pen" /></IconSlot><Swatch $bg="#222" /></Field>
          <FieldRow $mt={1}>
            <Select w={105} icon={<WeightIcon />} text="1.5" unit="PT" />
            <Select w={105} icon={<DashIcon />} text="Solid" />
          </FieldRow>
        </SectionBody>
        <SectionHead $grey>ROUNDED CORNERS<span>[+]</span></SectionHead>
        <SectionHead>CONNECTORS</SectionHead>
        <SectionBody $h={114}>
          <Field><IconSlot><ColorIcon kind="pen" /></IconSlot><Swatch>?</Swatch></Field>
          <FieldRow>
            <Select w={105} icon={<WeightIcon />} text="" unit="PT" mute />
            <Select w={105} icon={<DashIcon />} text="Solid" mute />
          </FieldRow>
          <FieldRow $mt={1}>
            <Select w={68} text="Style" mute /><Select w={68} text="Start" mute /><Select w={68} text="End" mute />
          </FieldRow>
        </SectionBody>
        <SectionHead>REPLACE COLORS</SectionHead>
        <Toggle><ToggleHalf>ENTIRE PROJECT</ToggleHalf><ToggleHalf $on>CURRENT PAGE</ToggleHalf></Toggle>
        <Hint>Click on any color below to<br />replace it on the current page</Hint>
      </Sections>
      <PanelScroll><Arrow $d="up" $color="#999" /><VThumb $h={693} $mt={6} /><Arrow $d="down" /></PanelScroll>
    </FormatBody>
  </FormatPanel>
);

const Tasks = () => (
  <TaskBar>
    <Task $w={48}><FaWindows size={17} /></Task>
    <Task $w={48}><S w={17} h={17} stroke="#fff" strokeWidth="1.3"><circle cx="10.5" cy="6" r="5" /><path d="M7 9.800L1 16" /></S></Task>
    <Task $w={49}><S w={17} h={16} stroke="#fff" strokeWidth="1.2"><path d="M0.600 0v2.500h10V0M0.600 16v-2.500h10V16M0.600 5h10v6h-10zM15 0v3.500M15 8v8" /><path d="M13.500 4.500h3v2.500h-3z" fill="#fff" stroke="none" /></S></Task>
    <Task $w={52}><S w={24} h={24}><rect width="24" height="24" rx="2" fill="#030608" /><path d="M3 10q5-2 9-1t9 5q-4 3-9 3t-6-3M8.500 4q0 6 3 9t6 6M15 5q-5 4-6 9t-1 6M9 6q7 1 8 6t-3 7M5 12l6-2 3 5-5 3z" stroke="#1b8fd6" strokeWidth="1.2" /></S></Task>
    <Task $w={47}><S w={24} h={24}><defs><linearGradient id="st" x1="0" y1="0" x2="0" y2="1"><stop offset="0" stopColor="#101a3c" /><stop offset="1" stopColor="#1b7db8" /></linearGradient></defs><circle cx="12" cy="12" r="11" fill="url(#st)" /><path d="M1 13l6 2.500M7 16L15 9" stroke="#fff" strokeWidth="4" strokeLinecap="round" /><circle cx="15.5" cy="8.5" r="4.3" fill="#1a2a55" stroke="#fff" strokeWidth="1.600" /><circle cx="15.500" cy="8.500" r="2" fill="#fff" /></S></Task>
    <Task><BiLogoVisualStudio size={28} color="#2496e0" /></Task>
    <Task $open><S w={20} h={22}><path d="M2.500 1h15q2 0 2 2v18l-3.500-3.500h-13.500q-2 0-2-2V3q0-2 2-2z" fill="#7289da" /><path d="M4 12.500c0-3 1-5 1.500-5.500 1-.8 2-.8 2.500-.8l.5.800h3l.5-.8c.5 0 1.500 0 2.500.8.500.5 1.500 2.500 1.500 5.500-1 1.300-2.500 1.500-3 1.500l-.7-1H7.700L7 14c-.5 0-2-.2-3-1.500z" fill="#fff" /><circle cx="7.800" cy="10.300" r="1.200" fill="#7289da" /><circle cx="12.200" cy="10.300" r="1.200" fill="#7289da" /></S></Task>
    <Task $open $active><S w={24} h={24}><circle cx="12" cy="12" r="11" fill="#f1f1f1" /><path d="M6.500 7L12 13l5.500-6M12 12.500V20" stroke="#e01b1b" strokeWidth="3" /></S></Task>
    <Task $open><S w={22} h={19}><path d="M0 1h8l2 2h11v15H0z" fill="#f0b429" /><path d="M0 5h21v13H0z" fill="#fddc6c" /><path d="M4 18.500v-7h13v7h-3.500v-3.500h-6v3.500z" fill="#3f9bdc" /></S></Task>
    <Task $open><S w={25} h={24}><path d="M11 5c7 0 11 4 11 8s-3 4-5 4-1.500 5-6 5C5 22 1 18 1 13s4-8 10-8z" fill="#b9dded" /><circle cx="6" cy="10" r="1.900" fill="#4caf50" /><circle cx="11.500" cy="8.500" r="1.900" fill="#f6c445" /><circle cx="5" cy="15" r="1.900" fill="#e2513c" /><circle cx="9" cy="18.500" r="1.900" fill="#3c6fd0" /><path d="M21.500 3L14 22" stroke="#d98b45" strokeWidth="2.400" /><path d="M19.500 1h5l-1.500 6-4-2z" fill="#c98a5c" /></S></Task>
    <Task $open><S w={22} h={22}><rect width="22" height="22" fill="#2ba3ec" /><path d="M0 17L8 8l13 14H0z" fill="#1d3f8a" /><path d="M11 14l4-4 7 7v5h-3.500z" fill="#3560b8" /><circle cx="14.500" cy="5" r="2" fill="#fff" /></S></Task>
    <Tray>
      <S w={12} h={8} stroke="#fff" strokeWidth="1.3"><path d="M0.500 7.500L6 1l5.500 6.500" /></S>
      <NetSlot><S w={17} h={15} stroke="#fff" strokeWidth="1.2"><path d="M4.500 1.600H16v8.800H3V6M9 10.500v3M5 13.600h8M1 0.600h3v4H1zM2.500 5v5" /></S></NetSlot>
      ENG
      <Clock>15:31<br />26.06.2020</Clock>
      <Notify><S w={17} h={17}><path d="M0.500 0.500h16v12H10L6 16.500v-4H0.500z" fill="#fff" /><path d="M3 4h11M3 6.700h11M3 9.400h8" stroke="#17233c" strokeWidth="1.200" /></S><Badge>2</Badge></Notify>
      <ShowDesk />
    </Tray>
  </TaskBar>
);

export default function App() {
  return (
    <Screen>
      <Global />
      <Chrome />
      <HeaderBar />
      <Main><LeftNav /><Pages /><CanvasArea /><Format /></Main>
      <Tasks />
    </Screen>
  );
}
